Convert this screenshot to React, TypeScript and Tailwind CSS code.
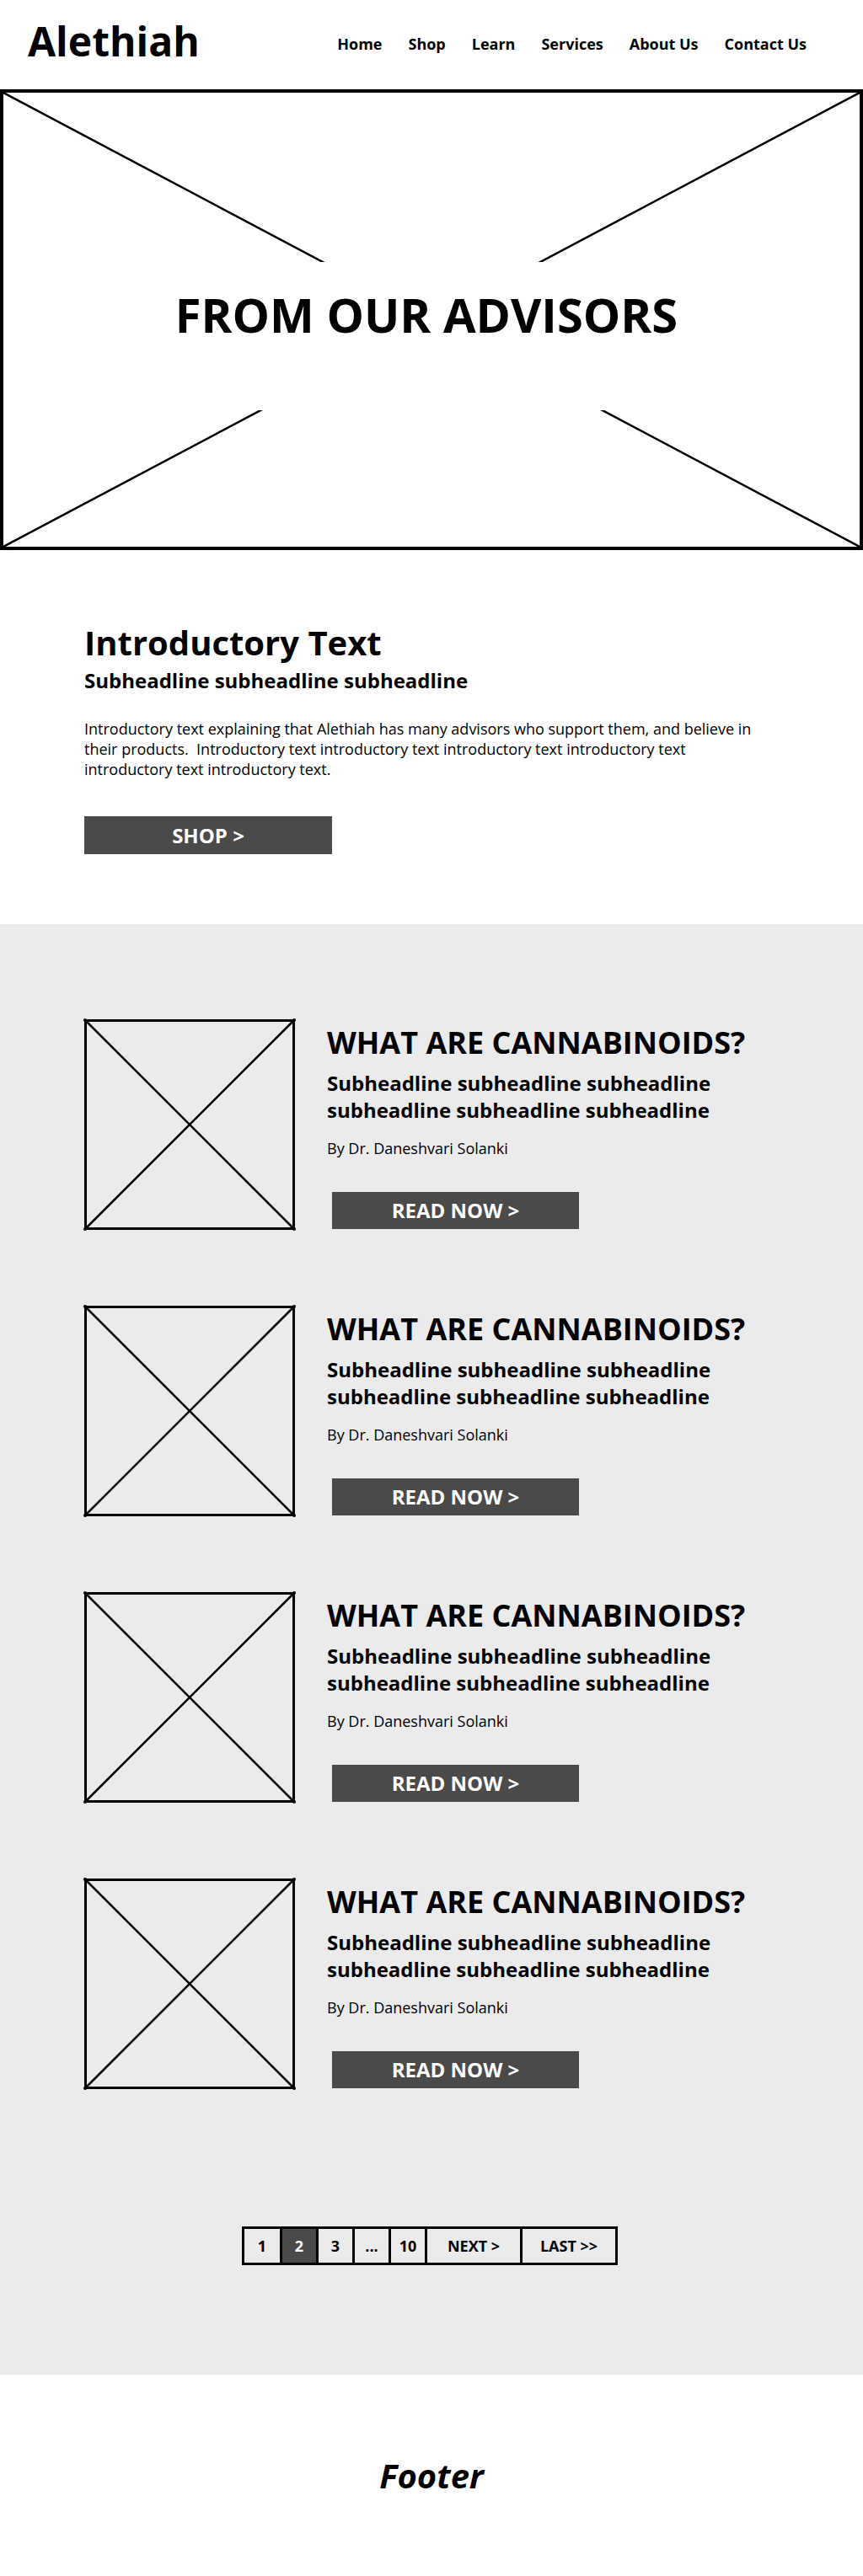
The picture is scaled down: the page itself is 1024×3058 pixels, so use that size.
const navItems = ["Home", "Shop", "Learn", "Services", "About Us", "Contact Us"];

const articles = [1, 2, 3, 4].map((n) => ({
  id: n,
  title: "WHAT ARE CANNABINOIDS?",
  sub: "Subheadline subheadline subheadline subheadline subheadline subheadline",
  author: "By Dr. Daneshvari Solanki",
}));

function Placeholder() {
  return (
    <svg width="250" height="250" viewBox="0 0 250 250" className="shrink-0 overflow-visible">
      <rect x="1.5" y="1.5" width="247" height="247" fill="none" stroke="black" strokeWidth="3" />
      <line x1="1" y1="1" x2="249" y2="249" stroke="black" strokeWidth="2.5" />
      <line x1="249" y1="1" x2="1" y2="249" stroke="black" strokeWidth="2.5" />
      <circle cx="1" cy="1" r="2" fill="black" />
      <circle cx="249" cy="1" r="2" fill="black" />
      <circle cx="1" cy="249" r="2" fill="black" />
      <circle cx="249" cy="249" r="2" fill="black" />
    </svg>
  );
}

function Article({ title, sub, author }: { title: string; sub: string; author: string }) {
  return (
    <div className="flex gap-[38px]">
      <Placeholder />
      <div className="flex w-[540px] flex-col pt-[6px]">
        <h2 className="text-[36px] leading-[44px] font-bold text-black">{title}</h2>
        <p className="mt-[10px] text-[24px] leading-[32px] font-bold text-black">{sub}</p>
        <p className="mt-[17px] text-[18px] leading-[24px] text-black">{author}</p>
        <button className="mt-[40px] ml-[6px] h-[44px] w-[293px] bg-[#4a4a4a] text-[24px] font-bold text-white">
          READ NOW &gt;
        </button>
      </div>
    </div>
  );
}

function Pagination() {
  const cells = [
    { label: "1", w: "w-[42px]" },
    { label: "2", w: "w-[43px]", active: true },
    { label: "3", w: "w-[43px]" },
    { label: "...", w: "w-[43px]" },
    { label: "10", w: "w-[43px]" },
    { label: "NEXT >", w: "w-[113px]" },
    { label: "LAST >>", w: "w-[113px]" },
  ];
  return (
    <div className="flex h-[46px] border-[3px] border-black">
      {cells.map((c, i) => (
        <div
          key={c.label}
          className={`flex items-center justify-center text-[18px] font-bold ${c.w} ${i > 0 ? "border-l-[3px] border-black" : ""} ${c.active ? "bg-[#4a4a4a] text-white" : "text-black"}`}
        >
          {c.label}
        </div>
      ))}
    </div>
  );
}

export default function App() {
  return (
    <div className="w-[1024px] bg-white font-['Open_Sans',sans-serif] text-black">
      <header className="flex h-[106px] justify-between pl-[33px] pr-[67px]">
        <div className="pt-[20px] text-[48px] leading-[58px] font-bold">Alethiah</div>
        <nav className="flex gap-[31px] pt-[40px] text-[18px] leading-[24px] font-bold">
          {navItems.map((item) => (
            <a key={item} href="#">
              {item}
            </a>
          ))}
        </nav>
      </header>

      <section className="relative flex h-[547px] justify-center border-4 border-black">
        <svg className="absolute inset-0 h-full w-full" viewBox="0 0 1016 539" preserveAspectRatio="none">
          <line x1="0" y1="0" x2="1016" y2="539" stroke="black" strokeWidth="2.5" />
          <line x1="1016" y1="0" x2="0" y2="539" stroke="black" strokeWidth="2.5" />
        </svg>
        <div className="relative mt-[201px] mr-[12px] h-[176px] bg-white px-[12px] pt-[29px]">
          <h1 className="text-[56px] leading-[67px] font-bold">FROM OUR ADVISORS</h1>
        </div>
      </section>

      <section className="pt-[86px] pb-[83px] pl-[100px]">
        <h2 className="text-[40px] leading-[48px] font-bold">Introductory Text</h2>
        <p className="mt-[5px] text-[24px] leading-[32px] font-bold">Subheadline subheadline subheadline</p>
        <p className="mt-[29px] w-[815px] text-[18px] leading-[24px]">
          Introductory text explaining that Alethiah has many advisors who support them, and believe in their
          products.&nbsp; Introductory text introductory text introductory text introductory text introductory text
          introductory text.
        </p>
        <button className="mt-[44px] h-[45px] w-[294px] bg-[#4a4a4a] text-[24px] font-bold text-white">SHOP &gt;</button>
      </section>

      <section className="bg-[#ebebeb] pt-[113px] pb-[130px] pl-[100px]">
        <div className="flex flex-col gap-[90px]">
          {articles.map((a) => (
            <Article key={a.id} title={a.title} sub={a.sub} author={a.author} />
          ))}
        </div>
        <div className="mt-[163px] flex justify-center pr-[104px]">
          <Pagination />
        </div>
      </section>

      <footer className="flex h-[240px] items-center justify-center">
        <p className="text-[40px] leading-[48px] font-bold italic">Footer</p>
      </footer>
    </div>
  );
}
